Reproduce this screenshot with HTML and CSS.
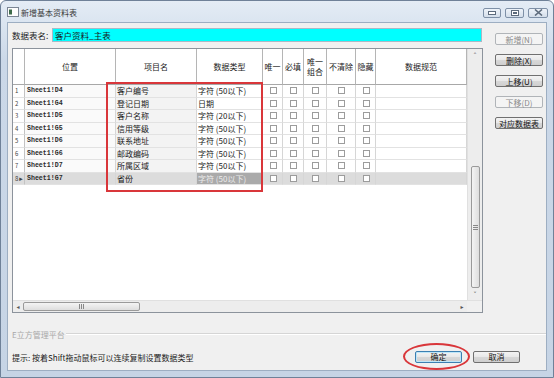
FILE: index.html
```html
<!DOCTYPE html>
<html lang="zh-CN">
<head>
    <meta charset="UTF-8">
    <title>新增基本资料表</title>
    <link rel="stylesheet" href="styles.css">
</head>
<body>
    <div class="window">
        <div class="titlebar">
            <svg class="app-icon" width="12" height="10" viewBox="0 0 12 10">
                <rect x="0.5" y="0.5" width="11" height="9" fill="#fdfdfd" stroke="#7a8594"/>
                <rect x="2" y="2.5" width="3" height="5" fill="#3d6b4a"/>
            </svg>
            <span class="title">新增基本资料表</span>
            <div class="caption-btns">
                <span class="cap cap-min"><svg width="8" height="4" viewBox="0 0 8 4"><rect x="0.5" y="0.5" width="7" height="3" fill="#fff" stroke="#5d6b7c"/></svg></span>
                <span class="cap cap-max"><svg width="8" height="6" viewBox="0 0 8 6"><rect x="0.5" y="0.5" width="7" height="5" fill="#fff" stroke="#5d6b7c"/><rect x="2" y="2" width="4" height="2" fill="#5d6b7c"/></svg></span>
                <span class="cap cap-close"><svg width="9" height="7" viewBox="0 0 9 7"><path d="M1 0.5 L8 6.5 M8 0.5 L1 6.5" stroke="#5d6b7c" stroke-width="1.6"/></svg></span>
            </div>
        </div>

        <div class="client">
            <div class="body">
                <div class="left">
                    <div class="name-row">
                        <span class="name-label">数据表名:</span>
                        <div class="name-field">客户资料_主表</div>
                    </div>

                    <div class="grid">
                        <div class="grid-view">
                            <div class="grid-cells">
                                <div class="grid-row head">
                                    <div class="cell"></div>
                                    <div class="cell">位置</div>
                                    <div class="cell">项目名</div>
                                    <div class="cell">数据类型</div>
                                    <div class="cell">唯一</div>
                                    <div class="cell">必填</div>
                                    <div class="cell two"><span>唯一</span><span>组合</span></div>
                                    <div class="cell">不清除</div>
                                    <div class="cell">隐藏</div>
                                    <div class="cell">数据规范</div>
                                </div>
                                <div id="rows"></div>
                            </div>
                            <div class="vscroll">
                                <div class="arrow">&#708;</div>
                                <div class="track"></div>
                                <div class="vthumb"><span class="grip"></span></div>
                                <div class="arrow">&#709;</div>
                            </div>
                        </div>
                        <div class="hscroll">
                            <div class="harrow">&#9666;</div>
                            <div class="hthumb"><span class="hgrip"></span></div>
                            <div class="htrack"></div>
                            <div class="harrow">&#9656;</div>
                            <div class="corner"></div>
                        </div>
                    </div>
                </div>

                <div class="side">
                    <button class="btn" disabled>新增(N)</button>
                    <button class="btn">删除(X)</button>
                    <button class="btn">上移(U)</button>
                    <button class="btn" disabled>下移(D)</button>
                    <button class="btn">对应数据表</button>
                </div>
            </div>

            <div class="group"><span>E立方管理平台</span></div>

            <div class="footer">
                <span class="hint">提示: 按着Shift拖动鼠标可以连续复制设置数据类型</span>
                <div class="footer-btns">
                    <button class="btn default">确定</button>
                    <button class="btn">取消</button>
                </div>
            </div>
        </div>

        <div class="mark-rect"></div>
        <div class="mark-ellipse"></div>
    </div>

    <script>
        const rows = [
            ['Sheet1!D4', '客户编号', '字符 (50以下)'],
            ['Sheet1!G4', '登记日期', '日期'],
            ['Sheet1!D5', '客户名称', '字符 (20以下)'],
            ['Sheet1!G5', '信用等级', '字符 (50以下)'],
            ['Sheet1!D6', '联系地址', '字符 (50以下)'],
            ['Sheet1!G6', '邮政编码', '字符 (50以下)'],
            ['Sheet1!D7', '所属区域', '字符 (50以下)'],
            ['Sheet1!G7', '省份', '字符 (50以下)']
        ];

        const rowsDiv = document.getElementById('rows');
        rows.forEach((row, index) => {
            const selected = index === rows.length - 1;
            const rowDiv = document.createElement('div');
            rowDiv.className = 'grid-row' + (selected ? ' selected' : '');
            let checks = '';
            for (let i = 0; i < 5; i++) {
                checks += '<div class="cell check"><span class="box"></span></div>';
            }
            rowDiv.innerHTML = `
                <div class="cell num">${index + 1}${selected ? '<span class="cur">&#9656;</span>' : ''}</div>
                <div class="cell pos">${row[0]}</div>
                <div class="cell item">${row[1]}</div>
                <div class="cell type">${row[2]}</div>
                ${checks}
                <div class="cell"></div>
            `;
            rowsDiv.appendChild(rowDiv);
        });
    </script>
</body>
</html>
```

FILE: styles.css
```css
body {
    margin: 0;
    font-family: "Noto Sans CJK SC", "DejaVu Sans", sans-serif;
    font-size: 8px;
    color: #1a1a1a;
}
.window {
    position: relative;
    width: 554px;
    height: 378px;
    box-sizing: border-box;
    border: 1px solid #6f8198;
    border-radius: 6px 6px 0 0;
    background: linear-gradient(#e4ecf5, #cbd8e8 60px, #c6d4e5);
    padding: 0 6px 6px 6px;
    display: flex;
    flex-direction: column;
}
.titlebar {
    height: 21px;
    display: flex;
    align-items: center;
    flex-shrink: 0;
}
.app-icon {
    margin-top: 1px;
}
.title {
    margin-left: 2px;
    font-size: 8px;
    color: #3a3a3a;
    margin-top: 1px;
}
.caption-btns {
    margin-left: auto;
    display: flex;
    gap: 4px;
    margin-top: 2px;
}
.cap {
    height: 10px;
    box-sizing: border-box;
    border: 1px solid #7e90a7;
    border-radius: 2px;
    background: linear-gradient(#eef3f9, #d4deea);
    display: flex;
    align-items: center;
    justify-content: center;
}
.cap-min { width: 18px; }
.cap-max { width: 19px; }
.cap-close { width: 20px; margin-right: -1px; }

.client {
    flex: 1;
    background: #f0f0f0;
    border: 1px solid #9daec2;
    padding: 5px 0 0 4px;
    display: flex;
    flex-direction: column;
}
.body {
    display: flex;
}
.left {
    width: 471px;
}
.name-row {
    display: flex;
    align-items: center;
    height: 14px;
}
.name-label {
    width: 40px;
    font-size: 8.5px;
}
.name-field {
    width: 430px;
    height: 14px;
    box-sizing: border-box;
    background: #00ffff;
    border: 1px solid #a9b8c6;
    padding-left: 2px;
    line-height: 12px;
    font-size: 8.5px;
}

.grid {
    margin-top: 6px;
    height: 265px;
    box-sizing: border-box;
    border: 1px solid #8c939c;
    background: #fff;
    display: flex;
    flex-direction: column;
}
.grid-view {
    flex: 1;
    display: flex;
}
.grid-cells {
    width: 454px;
}
.grid-row {
    display: grid;
    grid-template-columns: 12px 91px 81px 66px 20px 21px 23px 29px 20px 91px;
    height: 12.5px;
}
.grid-row.head {
    height: 36px;
}
.cell {
    box-sizing: border-box;
    border-right: 1px solid #d6d6d6;
    border-bottom: 1px solid #e2e2e2;
    white-space: nowrap;
    overflow: hidden;
    line-height: 11px;
    padding-left: 1px;
}
.head .cell {
    border-right-color: #b5b5b5;
    border-bottom-color: #a8a8a8;
    display: flex;
    align-items: center;
    justify-content: center;
    padding: 0;
    text-align: center;
    line-height: 10px;
}
.head .cell.two {
    flex-direction: column;
    line-height: 10px;
}
.num {
    font-size: 6px;
    color: #444;
    padding-left: 2px;
    border-right-color: #c3c3c3;
}
.cur {
    font-size: 7px;
    margin-left: 1px;
}
.pos {
    font-family: "Liberation Mono", monospace;
    font-size: 6.6px;
    font-weight: bold;
    color: #2a2a2a;
    background: #fafafa;
    padding-left: 2px;
}
.item {
    background: #f3f3f3;
}
.type {
    background: #fff;
}
.check {
    display: flex;
    align-items: center;
    justify-content: center;
}
.box {
    width: 7px;
    height: 7px;
    box-sizing: border-box;
    border: 1px solid #9c9c9c;
    background: #fff;
}
.selected .cell {
    background: #dcdcdc;
}
.selected .cell.type {
    background: #aaaaaa;
    color: #ececec;
}

.vscroll {
    width: 15px;
    background: #ededed;
    border-left: 1px solid #e0e0e0;
    box-sizing: border-box;
    display: flex;
    flex-direction: column;
    align-items: center;
}
.arrow {
    height: 12px;
    font-size: 7px;
    line-height: 12px;
    color: #555;
}
.track {
    flex: 1;
}
.vthumb {
    width: 9px;
    height: 122px;
    box-sizing: border-box;
    border: 1px solid #9a9a9a;
    border-radius: 2px;
    background: linear-gradient(90deg, #f4f4f4, #dedede);
    display: flex;
    align-items: center;
    justify-content: center;
}
.grip {
    width: 5px;
    height: 5px;
    border-top: 1px solid #888;
    border-bottom: 1px solid #888;
    box-sizing: border-box;
    background: linear-gradient(#888, #888) center / 5px 1px no-repeat;
}
.hscroll {
    height: 11px;
    display: flex;
    align-items: center;
    background: #ededed;
    border-top: 1px solid #e0e0e0;
}
.harrow {
    width: 10px;
    font-size: 6px;
    color: #555;
    text-align: center;
}
.hthumb {
    width: 117px;
    height: 9px;
    box-sizing: border-box;
    border: 1px solid #9a9a9a;
    border-radius: 2px;
    background: linear-gradient(#f4f4f4, #dedede);
    display: flex;
    align-items: center;
    justify-content: center;
}
.hgrip {
    width: 5px;
    height: 5px;
    border-left: 1px solid #888;
    border-right: 1px solid #888;
    box-sizing: border-box;
    background: linear-gradient(#888, #888) center / 1px 5px no-repeat;
}
.htrack {
    flex: 1;
}
.corner {
    width: 15px;
    height: 11px;
    background: #f0f0f0;
}

.side {
    margin-left: 12px;
    padding-top: 5px;
    display: flex;
    flex-direction: column;
    gap: 9px;
}
.btn {
    width: 48px;
    height: 12px;
    box-sizing: border-box;
    padding: 0;
    border: 1px solid #707070;
    border-radius: 2px;
    background: linear-gradient(#f3f3f3 0%, #e8e8e8 50%, #d8d8d8 51%, #cfcfcf 100%);
    font-family: inherit;
    font-size: 8px;
    line-height: 9px;
    color: #111;
}
.btn:disabled {
    border-color: #b0b4b8;
    background: #f4f4f4;
    color: #8a8a8a;
}
.btn.default {
    border-color: #3c7fb1;
    box-shadow: inset 0 0 0 1px #bfe6f8;
}

.group {
    margin-top: 16px;
    display: flex;
    align-items: center;
    height: 10px;
    color: #a8a8a8;
}
.group::after {
    content: "";
    flex: 1;
    border-top: 1px solid #d5d5d5;
    border-bottom: 1px solid #fff;
    margin-left: 1px;
}
.footer {
    margin-top: 11px;
    display: flex;
    align-items: center;
    height: 13px;
}
.hint {
    font-size: 8px;
    margin-top: 2px;
}
.footer-btns {
    margin-left: auto;
    margin-right: 26px;
    display: flex;
    gap: 11px;
}
.footer-btns .btn {
    width: 47px;
}

.mark-rect {
    position: absolute;
    left: 105px;
    top: 81px;
    width: 157px;
    height: 110px;
    box-sizing: border-box;
    border: 2px solid #d9363a;
}
.mark-ellipse {
    position: absolute;
    left: 402px;
    top: 342px;
    width: 67px;
    height: 27px;
    box-sizing: border-box;
    border: 2px solid #d9363a;
    border-radius: 50%;
}
```
